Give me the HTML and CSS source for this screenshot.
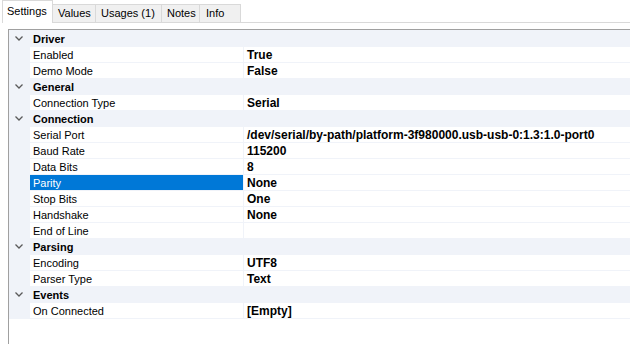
FILE: index.html
```html
<!DOCTYPE html>
<html>
<head>
<meta charset="utf-8">
<link rel="stylesheet" href="styles.css">
</head>
<body>
<div class="tabs">
  <div class="tab active">Settings</div>
  <div class="tab t-values">Values</div>
  <div class="tab t-usages">Usages (1)</div>
  <div class="tab t-notes">Notes</div>
  <div class="tab t-info">Info</div>
  <div class="tab-fill"></div>
</div>
<div class="panel">
  <div class="grid">
    <div class="row cat"><span class="gut"><svg class="chev" width="8" height="5" viewBox="0 0 8 5"><path d="M0.5 0.5 L4 4 L7.5 0.5" fill="none" stroke="#5a5a5a" stroke-width="1.3"/></svg></span><span class="cname">Driver</span></div>
    <div class="row"><span class="gut"></span><span class="name">Enabled</span><span class="val">True</span></div>
    <div class="row"><span class="gut"></span><span class="name">Demo Mode</span><span class="val">False</span></div>
    <div class="row cat"><span class="gut"><svg class="chev" width="8" height="5" viewBox="0 0 8 5"><path d="M0.5 0.5 L4 4 L7.5 0.5" fill="none" stroke="#5a5a5a" stroke-width="1.3"/></svg></span><span class="cname">General</span></div>
    <div class="row"><span class="gut"></span><span class="name">Connection Type</span><span class="val">Serial</span></div>
    <div class="row cat"><span class="gut"><svg class="chev" width="8" height="5" viewBox="0 0 8 5"><path d="M0.5 0.5 L4 4 L7.5 0.5" fill="none" stroke="#5a5a5a" stroke-width="1.3"/></svg></span><span class="cname">Connection</span></div>
    <div class="row"><span class="gut"></span><span class="name">Serial Port</span><span class="val">/dev/serial/by-path/platform-3f980000.usb-usb-0:1.3:1.0-port0</span></div>
    <div class="row"><span class="gut"></span><span class="name">Baud Rate</span><span class="val">115200</span></div>
    <div class="row"><span class="gut"></span><span class="name">Data Bits</span><span class="val">8</span></div>
    <div class="row"><span class="gut"></span><span class="name sel">Parity</span><span class="val">None</span></div>
    <div class="row"><span class="gut"></span><span class="name">Stop Bits</span><span class="val">One</span></div>
    <div class="row"><span class="gut"></span><span class="name">Handshake</span><span class="val">None</span></div>
    <div class="row"><span class="gut"></span><span class="name">End of Line</span><span class="val"></span></div>
    <div class="row cat"><span class="gut"><svg class="chev" width="8" height="5" viewBox="0 0 8 5"><path d="M0.5 0.5 L4 4 L7.5 0.5" fill="none" stroke="#5a5a5a" stroke-width="1.3"/></svg></span><span class="cname">Parsing</span></div>
    <div class="row"><span class="gut"></span><span class="name">Encoding</span><span class="val">UTF8</span></div>
    <div class="row"><span class="gut"></span><span class="name">Parser Type</span><span class="val">Text</span></div>
    <div class="row cat"><span class="gut"><svg class="chev" width="8" height="5" viewBox="0 0 8 5"><path d="M0.5 0.5 L4 4 L7.5 0.5" fill="none" stroke="#5a5a5a" stroke-width="1.3"/></svg></span><span class="cname">Events</span></div>
    <div class="row"><span class="gut"></span><span class="name">On Connected</span><span class="val">[Empty]</span></div>
    <div class="rest"></div>
  </div>
</div>
</body>
</html>
```

FILE: styles.css
```css
html, body {
  margin: 0;
  padding: 0;
  background: #ffffff;
  width: 630px;
  height: 344px;
  overflow: hidden;
}
body {
  font-family: "Liberation Sans", Arial, sans-serif;
  font-size: 11px;
  color: #000;
  display: flex;
  flex-direction: column;
}
.tabs {
  display: flex;
  align-items: flex-end;
  height: 23px;
  padding-left: 2px;
  box-sizing: border-box;
}
.tab {
  height: 19px;
  box-sizing: border-box;
  background: #f0f0f0;
  border: 1px solid #d9d9d9;
  border-left: none;
  border-bottom: 1px solid #d9d9d9;
  padding: 0 0 0 5px;
  line-height: 17px;
  white-space: nowrap;
}
.t-values { width: 43px; }
.t-usages { width: 66px; }
.t-notes { width: 38px; }
.t-info { width: 41px; padding-left: 6px; }
.tab.active {
  height: 23px;
  background: #fff;
  border: 1px solid #d9d9d9;
  border-bottom: none;
  padding: 0 0 0 4px;
  line-height: 21px;
  width: 51px;
}
.tab-fill {
  flex: 1;
  height: 1px;
  background: #d9d9d9;
}
.panel {
  flex: 1;
  padding: 6px 0 0 8px;
  display: flex;
  flex-direction: column;
}
.grid {
  flex: 1;
  border-top: 1px solid #a0a0a0;
  border-left: 1px solid #a0a0a0;
  display: flex;
  flex-direction: column;
}
.row {
  display: flex;
  height: 16px;
  flex: none;
  box-sizing: border-box;
  border-top: 1px solid #f0f3f9;
  background: #f0f3f9;
}
.gut {
  width: 21px;
  flex: none;
  display: flex;
  align-items: center;
  justify-content: center;
  padding-right: 1px;
  box-sizing: border-box;
}
.chev {
  display: block;
  margin-top: -1px;
}
.cname,
.name,
.val {
  padding-top: 2px;
  line-height: 13px;
  box-sizing: border-box;
  height: 15px;
  white-space: nowrap;
}
.cname {
  font-weight: bold;
  padding-left: 3px;
}
.name {
  width: 213px;
  flex: none;
  background: #fff;
  padding-left: 3px;
}
.name.sel {
  background: #0078d7;
  color: #fff;
}
.val {
  flex: 1;
  margin-left: 1px;
  background: #fff;
  font-weight: bold;
  font-size: 12px;
  padding-left: 3px;
  overflow: hidden;
}
.rest {
  flex: 1;
  background: #fff;
  border-top: 1px solid #f0f3f9;
}
```
